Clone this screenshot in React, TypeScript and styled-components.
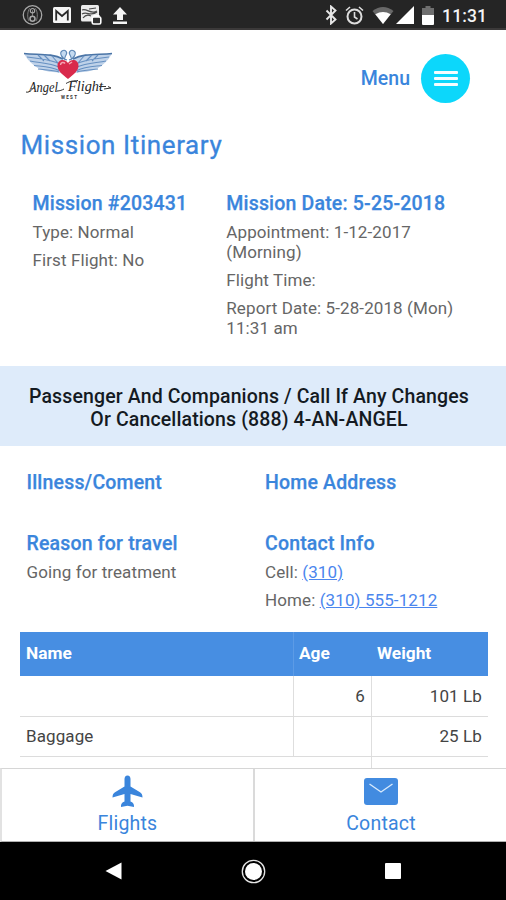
import React from "react";
import styled, { createGlobalStyle } from "styled-components";

const Global = createGlobalStyle`
  * { box-sizing: border-box; }
  body { margin: 0; background: #fff; font-family: Roboto, "Liberation Sans", sans-serif; }
  p, h1, h2 { margin: 0; }
`;

const BLUE = "#3a85dc";

const Screen = styled.div`
  width: 506px;
  height: 900px;
  display: flex;
  flex-direction: column;
  overflow: hidden;
  background: #fff;
`;

const StatusBar = styled.header`
  flex: none;
  height: 30px;
  display: flex;
  justify-content: space-between;
  align-items: center;
  padding: 2px 19px 0 22px;
  background: #252525;
  border-bottom: 2px solid #3b3939;
`;

const StatusGroup = styled.div<{ $gap: number }>`
  display: flex;
  align-items: center;
  gap: ${(p) => p.$gap}px;
`;

const Clock = styled.span`
  color: #f4f4f4;
  font-size: 17.5px;
  font-weight: 500;
  line-height: 20px;
  padding-top: 2px;
  margin-left: 1px;
  letter-spacing: 0.1px;
`;

const SignalIcon = styled.svg`
  margin-left: -5px;
`;

const Content = styled.main`
  flex: 1;
  min-height: 0;
  overflow: hidden;
`;

const Brand = styled.div`
  height: 100px;
  padding: 18px 36px 0 22px;
  display: flex;
  justify-content: space-between;
  align-items: flex-start;
`;

const MenuLink = styled.div`
  display: flex;
  align-items: center;
  gap: 11px;
  height: 60px;
  color: ${BLUE};
  font-size: 19.5px;
  font-weight: 500;
`;

const MenuButton = styled.button`
  width: 49px;
  height: 49px;
  padding: 0;
  border: 0;
  border-radius: 50%;
  background: #0cd7fb;
  display: flex;
  flex-direction: column;
  align-items: center;
  justify-content: center;
  gap: 3px;
`;

const MenuLine = styled.span`
  width: 24px;
  height: 3px;
  border-radius: 1px;
  background: #f4fdff;
`;

const Title = styled.h1`
  height: 30px;
  padding-left: 20.5px;
  color: ${BLUE};
  font-size: 26px;
  line-height: 30px;
  font-weight: 400;
  letter-spacing: 0.6px;
  -webkit-text-stroke: 0.3px ${BLUE};
`;

const Columns = styled.section<{ $left: number; $second: number; $top: number; $height: number }>`
  display: grid;
  grid-template-columns: ${(p) => p.$second - p.$left}px 1fr;
  padding: ${(p) => p.$top}px 20px 0 ${(p) => p.$left}px;
  height: ${(p) => p.$height}px;
`;

const Heading = styled.h2`
  color: ${BLUE};
  font-size: 19.5px;
  line-height: 24px;
  font-weight: 500;
  letter-spacing: 0.18px;
  white-space: nowrap;
  margin-bottom: 6px;
  -webkit-text-stroke: 0.25px ${BLUE};
`;

const Detail = styled.p`
  color: #666;
  font-size: 17px;
  line-height: 20px;
  margin-bottom: 8.2px;
  letter-spacing: 0.1px;
`;

const Phone = styled.a`
  color: #4b86ee;
  text-decoration: underline;
`;

const Banner = styled.div`
  height: 80px;
  padding: 19px 8px 0 0;
  background: #deebfa;
  color: #141a22;
  font-size: 19.5px;
  line-height: 23px;
  font-weight: 500;
  letter-spacing: 0.13px;
  text-align: center;
`;

const Table = styled.div`
  width: 468px;
  margin-left: 20px;
`;

const Row = styled.div<{ $head?: boolean }>`
  display: grid;
  grid-template-columns: 274px 78px 116px;
  height: ${(p) => (p.$head ? 44 : 40.5)}px;
  background: ${(p) => (p.$head ? "#478ee2" : "#fff")};
  color: ${(p) => (p.$head ? "#fff" : "#444")};
  font-size: ${(p) => (p.$head ? 17.3 : 17)}px;
  font-weight: ${(p) => (p.$head ? 700 : 400)};
  letter-spacing: ${(p) => (p.$head ? 0 : 0.1)}px;
  border-bottom: ${(p) => (p.$head ? "0" : "1px solid #dcdcdc")};
`;

const Cell = styled.div<{ $right?: boolean; $line?: string; $head?: boolean; $inset?: number }>`
  display: flex;
  align-items: center;
  justify-content: ${(p) => (p.$right ? "flex-end" : "flex-start")};
  padding: 0 6px ${(p) => (p.$head ? 2 : 0)}px ${(p) => p.$inset ?? 6}px;
  border-right: ${(p) => (p.$line ? `1px solid ${p.$line}` : "0")};
`;

const Tabs = styled.nav`
  flex: none;
  height: 74px;
  display: grid;
  grid-template-columns: 253px 252px;
  border-top: 1px solid #d6d6d6;
  border-bottom: 1px solid #b0b0b0;
  border-left: 2px solid #e2e2e2;
`;

const Tab = styled.a<{ $divided?: boolean }>`
  display: flex;
  flex-direction: column;
  align-items: center;
  padding-top: 6px;
  border-right: ${(p) => (p.$divided ? "2px solid #dadada" : "0")};
  color: ${BLUE};
  font-size: 19.5px;
  line-height: 24px;
  letter-spacing: 0.2px;
`;

const TabIcon = styled.span`
  height: 37px;
  display: flex;
  align-items: flex-start;
`;

const SystemNav = styled.footer`
  flex: none;
  height: 58px;
  display: flex;
  justify-content: space-between;
  align-items: center;
  padding: 0 105px 0 105px;
  background: #000;
`;

const Logo = () => (
  <svg width="92" height="54" viewBox="0 0 92 54">
    {[false, true].map((flip) => (
      <g key={String(flip)} transform={flip ? "translate(92 0) scale(-1 1)" : undefined}>
        <path d="M2 5.500C16 7 30 5 41 11v14C32 24 22 24 16 20 9 16 5 11 2 5.500Z" fill="#bfd2e9" />
        <path
          d="M2 5.500C16 7 30 5 41 11"
          fill="none" stroke="#4a74a6" strokeWidth="1.600"
        />
        <path
          d="M5 9c12 2 23 2 33 7M8 13c10 2 20 2 29 6M12 17.500c8 1 17 1 25 5M16 21c7 1 14 1 21 3M22 7l6 6M30 8l6 7M16 7l6 6"
          fill="none" stroke="#6690c1" strokeWidth="1.100"
        />
        <path d="M45 12C40 11 37 5 40 3c3-2 6 1 4 4-1 2-2 3-1 5" fill="#c4daf0" stroke="#5d87b5" strokeWidth="1.100" />
      </g>
    ))}
    <path d="M46 31C40 26 35.500 23 35.500 17.500c0-6 7.500-7.500 10.500-2.500 3-5 10.500-3.500 10.500 2.500C56.500 23 52 26 46 31Z" fill="#d92a4c" />
    <path d="M38.500 17c0-2.500 3-3.500 4.500-1.500M47 16l3-2" fill="none" stroke="#f3a3b2" strokeWidth="1.500" />
    <g fontFamily="Liberation Serif, serif" fontStyle="italic" fontSize="14.500" fill="#242424">
      <text x="7" y="43.500" textLength="29" lengthAdjust="spacingAndGlyphs">Angel</text>
      <text x="46" y="43" textLength="35" lengthAdjust="spacingAndGlyphs">Flight</text>
    </g>
    <path d="M4 44c3 1 6-2 9-6M35 43c3 0 5-1 7-2M44 35.500c5-3 8-2.500 12-3M82 41l7-1-3-1.500M77 38.500h7" fill="none" stroke="#333" strokeWidth="1" />
    <text x="39" y="50.500" fontFamily="Roboto, sans-serif" fontWeight="700" fontSize="4.500" textLength="16" fill="#333">WEST</text>
  </svg>
);

const NoticeIcons = () => (
  <StatusGroup $gap={10}>
    <svg width="21" height="22" viewBox="0 0 22 22" fill="none" stroke="#a9a9a9">
      <circle cx="11" cy="11" r="9.700" strokeWidth="1.300" />
      <circle cx="11" cy="6.500" r="2.300" strokeWidth="1.200" />
      <path d="M11 6v6M8 4c-2.500 4-2.500 9-1 13M14 4c2.500 4 2.500 9 1 13" strokeWidth="0.700" />
      <circle cx="11" cy="15" r="2.600" strokeWidth="1.600" />
    </svg>
    <svg width="18" height="16" viewBox="0 0 18 16">
      <rect width="18" height="16" rx="1.500" fill="#f5f5f5" />
      <path d="M3.200 13.500V4l5.800 5 5.800-5v9.500" fill="none" stroke="#292929" strokeWidth="1.800" />
    </svg>
    <svg width="21" height="20" viewBox="0 0 21 20">
      <rect width="18" height="16.500" rx="1.500" fill="#ececec" />
      <path d="M1 5c5-2 9 5 15 1M1 9c5-3 9 3 15-2M2 13c3-4 6-3 8-2M8 4l7-1" fill="none" stroke="#4a4a4a" strokeWidth="1.200" />
      <rect x="11.200" y="12" width="8.600" height="7" rx="1.500" fill="#303030" stroke="#fff" strokeWidth="1.600" />
      <path d="M13 12v-1.500h5V12" fill="none" stroke="#fff" strokeWidth="1.200" />
    </svg>
    <svg width="16" height="17" viewBox="0 0 16 17" fill="#f5f5f5">
      <path d="M8 0l7 7.500h-4V13H5V7.500H1ZM1 14.500h14V17H1Z" />
    </svg>
  </StatusGroup>
);

const SystemIcons = () => (
  <StatusGroup $gap={7.5}>
    <svg width="13" height="20" viewBox="0 0 13 20" fill="none" stroke="#e6e6e6" strokeWidth="1.900">
      <path d="M1.500 5.500l9 9-4.500 4V1.500l4.500 4-9 9" />
    </svg>
    <svg width="19" height="19" viewBox="0 0 19 19" fill="none" stroke="#dedede" strokeWidth="2">
      <circle cx="9.500" cy="10.500" r="7" />
      <path d="M9.500 6v5l3 2M1 4.500L5 1M18 4.500L14 1" strokeWidth="1.600" />
    </svg>
    <svg width="22" height="18" viewBox="0 0 22 18">
      <path d="M0.500 5Q11-3 21.500 5L11 18Z" fill="#686868" />
      <path d="M3.300 8.300Q11 3.500 18.700 8.300L11 18Z" fill="#fff" />
    </svg>
    <SignalIcon width="18" height="18" viewBox="0 0 18 18">
      <path d="M18 0v18H0Z" fill="#fff" />
    </SignalIcon>
    <svg width="12" height="19" viewBox="0 0 12 19">
      <path d="M3.500 0h5v2H12v7H0V2h3.500Z" fill="#6f6f6f" />
      <path d="M0 9h12v9a1 1 0 01-1 1H1a1 1 0 01-1-1Z" fill="#fff" />
    </svg>
    <Clock>11:31</Clock>
  </StatusGroup>
);

export default function App() {
  return (
    <Screen>
      <Global />
      <StatusBar>
        <NoticeIcons />
        <SystemIcons />
      </StatusBar>
      <Content>
        <Brand>
          <Logo />
          <MenuLink>
            Menu
            <MenuButton aria-label="Open menu">
              <MenuLine />
              <MenuLine />
              <MenuLine />
            </MenuButton>
          </MenuLink>
        </Brand>
        <Title>Mission Itinerary</Title>
        <Columns $left={32.5} $second={226.3} $top={32} $height={206}>
          <div>
            <Heading>Mission #203431</Heading>
            <Detail>Type: Normal</Detail>
            <Detail>First Flight: No</Detail>
          </div>
          <div>
            <Heading>Mission Date: 5-25-2018</Heading>
            <Detail>Appointment: 1-12-2017<br />(Morning)</Detail>
            <Detail>Flight Time:</Detail>
            <Detail>Report Date: 5-28-2018 (Mon)<br />11:31 am</Detail>
          </div>
        </Columns>
        <Banner>
          Passenger And Companions / Call If Any Changes<br />
          Or Cancellations (888) 4-AN-ANGEL
        </Banner>
        <Columns $left={26.5} $second={265} $top={25} $height={86}>
          <Heading>Illness/Coment</Heading>
          <Heading>Home Address</Heading>
        </Columns>
        <Columns $left={26.5} $second={265} $top={0} $height={100}>
          <div>
            <Heading>Reason for travel</Heading>
            <Detail>Going for treatment</Detail>
          </div>
          <div>
            <Heading>Contact Info</Heading>
            <Detail>Cell: <Phone>(310)</Phone></Detail>
            <Detail>Home: <Phone>(310) 555-1212</Phone></Detail>
          </div>
        </Columns>
        <Table>
          <Row $head>
            <Cell $head $line="#5c9be6">Name</Cell>
            <Cell $head $inset={5}>Age</Cell>
            <Cell $head $inset={5}>Weight</Cell>
          </Row>
          <Row>
            <Cell $line="#dedede" />
            <Cell $line="#dedede" $right>6</Cell>
            <Cell $right>101 Lb</Cell>
          </Row>
          <Row>
            <Cell $line="#dedede">Baggage</Cell>
            <Cell $line="#dedede" />
            <Cell $right>25 Lb</Cell>
          </Row>
          <Row>
            <Cell />
            <Cell $line="#dedede" />
            <Cell />
          </Row>
        </Table>
      </Content>
      <Tabs>
        <Tab $divided>
          <TabIcon>
            <svg width="31" height="33" viewBox="0 0 31 33" fill={BLUE}>
              <path d="M15.500 0.500c2 0 3 1.600 3 3.600v7.400l9.500 5.800c1.800 1.100 2.500 2.500 2.500 5.200L18.500 19v7.500c2.500 1 3.800 2.500 3.500 5.500l-6.500-1.200L9 32c-.3-3 1-4.500 3.500-5.500V19L.5 22.500c0-2.700.7-4.100 2.500-5.200l9.500-5.800V4.100c0-2 1-3.600 3-3.600Z" />
            </svg>
          </TabIcon>
          Flights
        </Tab>
        <Tab>
          <TabIcon>
            <svg width="34" height="31" viewBox="0 0 34 31">
              <rect y="3" width="34" height="27" rx="3" fill="#428be0" />
              <path d="M5.500 9l11.500 8 11.500-8" fill="none" stroke="#d8eafc" strokeWidth="1.400" />
            </svg>
          </TabIcon>
          Contact
        </Tab>
      </Tabs>
      <SystemNav>
        <svg width="17" height="18" viewBox="0 0 17 18"><path d="M16.500 0.500v17L0.500 9Z" fill="#fff" /></svg>
        <svg width="25" height="25" viewBox="0 0 25 25">
          <circle cx="12.500" cy="12.500" r="11.200" fill="none" stroke="#e6e6e6" strokeWidth="1.300" />
          <circle cx="12.500" cy="12.500" r="8.500" fill="#fff" />
        </svg>
        <svg width="16" height="16" viewBox="0 0 16 16"><rect width="16" height="16" rx="1" fill="#fff" /></svg>
      </SystemNav>
    </Screen>
  );
}
